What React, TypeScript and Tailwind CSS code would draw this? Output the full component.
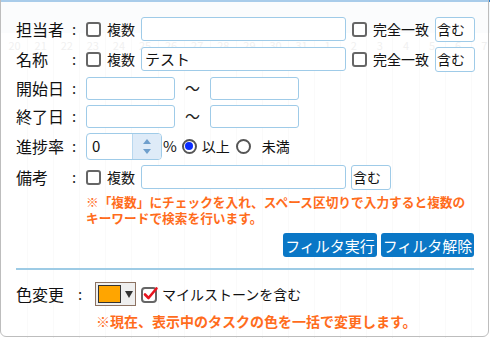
import React from "react";

const days = [20, 21, 22, 23, 24, 25, 26, 27, 28, 29, 30, 31, 1, 2, 3, 4, 5, 6, 7];

function Check({ checked = false }: { checked?: boolean }) {
  if (checked) {
    return (
      <svg width="18" height="17" viewBox="0 0 18 17" className="block shrink-0">
        <rect x="1" y="2" width="14" height="14" rx="3" fill="white" stroke="#666" strokeWidth="2" />
        <path d="M4 8.5 L7.5 12 L15.5 2.5" fill="none" stroke="#e8141e" strokeWidth="2.6" strokeLinecap="round" strokeLinejoin="round" />
      </svg>
    );
  }
  return <span className="block w-[15px] h-[15px] shrink-0 rounded-[3px] border-2 border-[#666] bg-white" />;
}

function Radio({ on = false }: { on?: boolean }) {
  return (
    <span className="w-[15px] h-[15px] shrink-0 rounded-full border-2 border-[#555] bg-white flex items-center justify-center">
      {on && <span className="block w-[8px] h-[8px] rounded-full bg-[#0b2cff]" />}
    </span>
  );
}

function Field({ w, value = "", h = "h-[24px]" }: { w: string; value?: string; h?: string }) {
  return (
    <div className={`${w} ${h} shrink-0 rounded-[3px] border border-[#9fcbe8] bg-white px-[3px] flex items-center text-[15px] text-[#111]`}>
      {value}
    </div>
  );
}

function Contains() {
  return (
    <div className="w-[40px] h-[25px] shrink-0 rounded-[3px] border border-[#9fcbe8] bg-white flex items-center pl-[1px] text-[14px] text-[#111]">
      含む
    </div>
  );
}

function Label({ text }: { text: string }) {
  return (
    <>
      <span className="w-[56px] shrink-0 text-[16px] text-[#111]">{text}</span>
      <span className="w-[14px] shrink-0 text-[15px] text-[#222]">:</span>
    </>
  );
}

export default function App() {
  return (
    <div
      className="relative w-[490px] h-[338px] overflow-hidden bg-white"
      style={{ fontFamily: '"Noto Sans CJK JP", "Noto Sans", sans-serif' }}
    >
      {/* gantt chart behind the filter panel */}
      <div className="flex flex-col h-full">
        <div className="h-[2px] bg-[#2a7fcb]" />
        <div className="h-[31px] bg-[#f4f8fb]" />
        <div className="flex flex-1 pl-[2px]">
          {days.map((d, i) => (
            <div key={i} className="w-[26.1px] shrink-0 border-r border-[#f3f3f3] flex justify-center">
              <span className="text-[11px] text-[#dadada] leading-none mt-[7px]">{d}</span>
            </div>
          ))}
        </div>
      </div>

      {/* filter panel */}
      <div className="absolute left-0 top-[-2px] w-[489px] h-[339px] rounded-b-[6px] border border-[#bdbdbd] bg-white/60 pl-[15px] pr-[13px] pt-[16px]">
        <div className="flex items-center h-[28px]">
          <Label text="担当者" />
          <Check />
          <span className="ml-[6px] text-[14px] text-[#111] w-[28px]">複数</span>
          <div className="ml-[6px]"><Field w="w-[205px]" /></div>
          <span className="ml-[6px]"><Check /></span>
          <span className="ml-[6px] text-[14px] text-[#111]">完全一致</span>
          <div className="ml-[6px]"><Contains /></div>
        </div>

        <div className="flex items-center h-[28px] mt-[2px]">
          <Label text="名称" />
          <Check />
          <span className="ml-[6px] text-[14px] text-[#111] w-[28px]">複数</span>
          <div className="ml-[6px]"><Field w="w-[205px]" value="テスト" /></div>
          <span className="ml-[6px]"><Check /></span>
          <span className="ml-[6px] text-[14px] text-[#111]">完全一致</span>
          <div className="ml-[6px]"><Contains /></div>
        </div>

        <div className="flex items-center h-[28px] mt-[1px]">
          <Label text="開始日" />
          <Field w="w-[89px]" h="h-[23px]" />
          <span className="w-[35px] text-center text-[15px] text-[#222]">〜</span>
          <Field w="w-[89px]" h="h-[23px]" />
        </div>

        <div className="flex items-center h-[28px]">
          <Label text="終了日" />
          <Field w="w-[89px]" h="h-[23px]" />
          <span className="w-[35px] text-center text-[15px] text-[#222]">〜</span>
          <Field w="w-[89px]" h="h-[23px]" />
        </div>

        <div className="flex items-center h-[30px] mt-[1px]">
          <Label text="進捗率" />
          <div className="w-[76px] h-[27px] rounded-[4px] border border-[#9fcbe8] bg-white flex overflow-hidden">
            <span className="flex-1 flex items-center pl-[5px] text-[15px] text-[#111]">0</span>
            <div className="w-[29px] border-l border-[#b9d8ef] bg-[#deebf8] flex flex-col items-center justify-center gap-[5px]">
              <svg width="8" height="5" viewBox="0 0 8 5"><path d="M0 5 L4 0 L8 5 Z" fill="#6f9fcc" /></svg>
              <svg width="8" height="5" viewBox="0 0 8 5"><path d="M0 0 L4 5 L8 0 Z" fill="#6f9fcc" /></svg>
            </div>
          </div>
          <span className="ml-[1px] text-[15px] text-[#111]">%</span>
          <span className="ml-[5px]"><Radio on /></span>
          <span className="ml-[5px] text-[14px] text-[#111]">以上</span>
          <span className="ml-[6px]"><Radio /></span>
          <span className="ml-[11px] text-[14px] text-[#111]">未満</span>
        </div>

        <div className="flex items-center h-[30px] mt-[1px]">
          <Label text="備考" />
          <Check />
          <span className="ml-[6px] text-[14px] text-[#111] w-[28px]">複数</span>
          <div className="ml-[6px]"><Field w="w-[205px]" /></div>
          <div className="ml-[5px]"><Contains /></div>
        </div>

        <div className="pl-[70px] mt-[2px] text-[12.7px] leading-[16px] font-bold text-[#ff6c1c]">
          <p>※「複数」にチェックを入れ、スペース区切りで入力すると複数の</p>
          <p>キーワードで検索を行います。</p>
        </div>

        <div className="flex justify-end gap-[4px] mt-[7px] mr-[1px]">
          <button className="h-[24px] w-[94px] rounded-[3px] bg-[#0a77c6] text-white text-[15px] leading-none">フィルタ実行</button>
          <button className="h-[24px] w-[93px] rounded-[3px] bg-[#0a77c6] text-white text-[15px] leading-none">フィルタ解除</button>
        </div>

        <div className="h-[2px] bg-[#9dcbe5] mt-[11px] mr-[1px]" />

        <div className="flex items-center h-[26px] mt-[11px]">
          <span className="w-[62px] shrink-0 text-[16px] text-[#111]">色変更</span>
          <span className="w-[17px] shrink-0 text-[15px] text-[#222]">:</span>
          <div className="w-[41px] h-[24px] border border-[#8c7262] bg-[#efefef] flex items-center pl-[2px] gap-[4px]">
            <span className="w-[23px] h-[18px] bg-[#ffa500] border border-[#333]" />
            <svg width="8" height="7" viewBox="0 0 8 7"><path d="M0 0 L8 0 L4 7 Z" fill="#333" /></svg>
          </div>
          <span className="ml-[5px]"><Check checked /></span>
          <span className="ml-[3px] text-[14px] text-[#111]">マイルストーンを含む</span>
        </div>

        <p className="pl-[80px] mt-[5px] text-[14px] leading-[18px] font-bold text-[#ff6c1c]">
          ※現在、表示中のタスクの色を一括で変更します。
        </p>
      </div>
    </div>
  );
}
